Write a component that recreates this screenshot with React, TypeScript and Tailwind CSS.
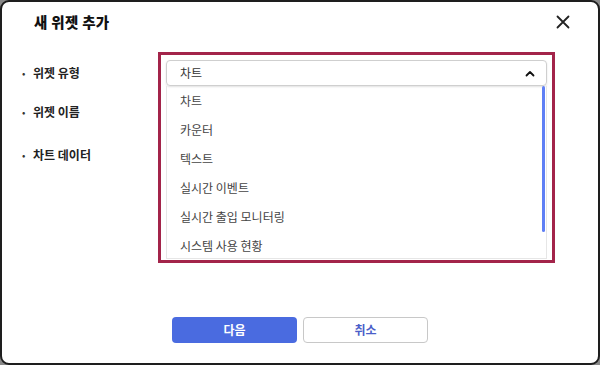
import React from 'react';

const font = { fontFamily: '"Noto Sans CJK KR", "Noto Sans", sans-serif' };

const widgetTypes = ['차트', '카운터', '텍스트', '실시간 이벤트', '실시간 출입 모니터링', '시스템 사용 현황'];

const FieldLabel = ({ text, className }: { text: string; className?: string }) => (
  <div className={`flex items-center h-[20px] ${className || ''}`}>
    <span className="w-[11px] text-[10px] text-[#333] leading-none">•</span>
    <span className="text-[12px] font-bold text-[#222] leading-none">{text}</span>
  </div>
);

export default function App() {
  return (
    <div className="w-[600px] h-[365px] bg-[#8a8a8a]" style={font}>
      <div className="w-full h-full bg-white border-2 border-[#1e1e1e] rounded-[9px] flex flex-col">
        {/* header */}
        <div className="h-[40px] flex items-center">
          <h2 className="ml-[32px] text-[14.5px] font-black text-[#111] tracking-[0.3px]">새 위젯 추가</h2>
          <svg width="14" height="14" viewBox="0 0 14 14" className="ml-auto mr-[28px] mt-[-1px]">
            <path d="M1.5 1.5 L12.5 12.5 M12.5 1.5 L1.5 12.5" stroke="#222" strokeWidth="1.8" strokeLinecap="round" />
          </svg>
        </div>

        {/* body */}
        <div className="flex mt-[10px] pl-[20px]">
          <div className="w-[136px] pt-[11px] flex flex-col">
            <FieldLabel text="위젯 유형" />
            <FieldLabel text="위젯 이름" className="mt-[19px]" />
            <FieldLabel text="차트 데이터" className="mt-[23px]" />
          </div>

          <div className="w-[397px] h-[211px] border-[3px] border-[#a3244a] pt-[5px] px-[5px]">
            <div className="h-[26px] border border-[#cfcfcf] rounded-[4px] flex items-center justify-between pl-[13px] pr-[11px] shadow-[0_1px_2px_rgba(0,0,0,0.12)]">
              <span className="text-[12px] text-[#333]">차트</span>
              <svg width="10" height="7" viewBox="0 0 10 7">
                <path d="M1.5 5.5 L5 2 L8.5 5.5" fill="none" stroke="#111" strokeWidth="1.8" strokeLinecap="round" strokeLinejoin="round" />
              </svg>
            </div>
            <div className="relative border-x border-b border-[#e6e6e6] h-[173px] overflow-hidden">
              {widgetTypes.map(t => (
                <div key={t} className="h-[29px] flex items-center pl-[13px] text-[12px] text-[#444]">{t}</div>
              ))}
              <div className="absolute right-[1px] top-0 w-[3px] h-[146px] rounded-full bg-[#5f7ff5]" />
            </div>
          </div>
        </div>

        {/* footer */}
        <div className="flex justify-center gap-[6px] mt-[54px]">
          <button className="w-[125px] h-[26px] rounded-[4px] bg-[#4a6be0] text-white text-[12px] font-bold">다음</button>
          <button className="w-[125px] h-[26px] rounded-[4px] bg-white border border-[#c8c8c8] text-[#4a5ec9] text-[12px] font-bold">취소</button>
        </div>
      </div>
    </div>
  );
}
